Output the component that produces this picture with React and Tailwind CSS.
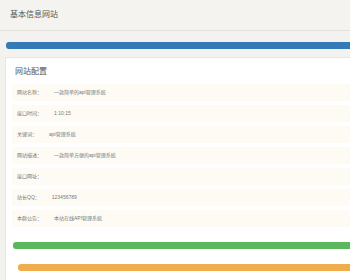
import React from "react";

const rows = [
  { label: "网站名称：", value: "一款简单的api管理系统" },
  { label: "接口时间：", value: "1:10:15" },
  { label: "关键词：", value: "api管理系统" },
  { label: "网站描述：", value: "一款简单方便的api管理系统" },
  { label: "接口网址：", value: "" },
  { label: "站长QQ：", value: "123456789" },
  { label: "本群公告：", value: "本站在线API管理系统" },
];

export default function App() {
  return (
    <div
      className="w-[350px] h-[280px] overflow-hidden bg-[#f3f2ef]"
      style={{ fontFamily: '"Liberation Sans", "Noto Sans CJK SC", sans-serif' }}
    >
      {/* Header */}
      <div className="h-[31px] bg-[#f4f3f0] border-b border-[#e4e2dc] pl-[10px] flex items-center text-[8px] text-[#555]">
        基本信息网站
      </div>

      {/* Blue progress */}
      <div className="mt-[11px] ml-[6px] mr-[-10px] h-[7px] rounded-[3px] bg-[#337ab7]" />

      {/* Panel */}
      <div className="mt-[8px] ml-[5px] mr-[-10px] bg-white border-l border-t border-[#e6e6e6] pb-[20px]">
        <div className="pl-[9px] pt-[8px] h-[26px] text-[8px] text-[#555]">网站配置</div>

        <div className="ml-[6px] flex flex-col gap-[4px]">
          {rows.map((row, i) => (
            <div
              key={i}
              className="h-[17px] bg-[#fdfbf4] pl-[5px] flex items-center gap-[12px] text-[5px] text-[#777]"
            >
              <span>{row.label}</span>
              <span>{row.value}</span>
            </div>
          ))}
        </div>

        <div className="mt-[15px] ml-[7px] h-[7px] rounded-[3px] bg-[#5cb85c]" />
        <div className="mt-[15px] ml-[12px] h-[7px] rounded-[3px] bg-[#f0ad4e]" />
      </div>
    </div>
  );
}
